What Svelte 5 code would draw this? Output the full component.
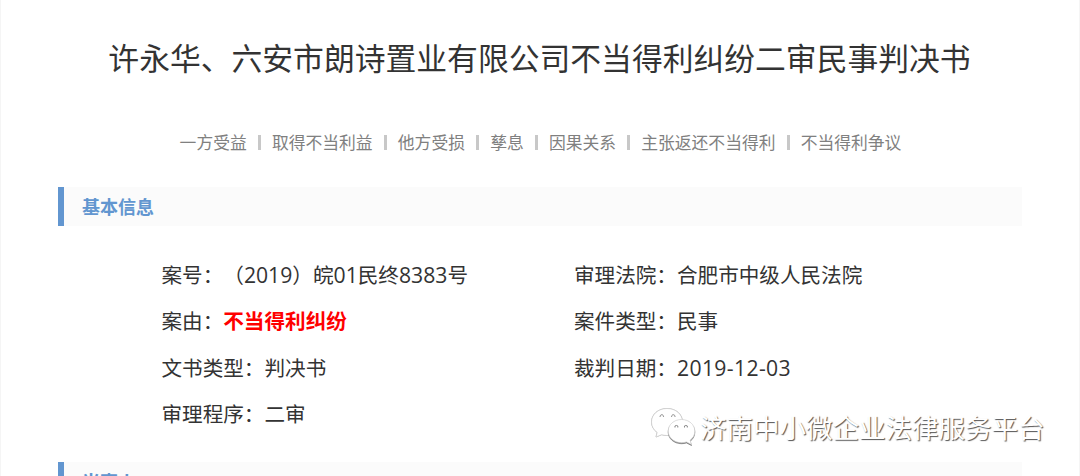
<script>
    const title = '许永华、六安市朗诗置业有限公司不当得利纠纷二审民事判决书';

    const keywords = ['一方受益', '取得不当利益', '他方受损', '孳息', '因果关系', '主张返还不当得利', '不当得利争议'];

    const leftInfo = [
        { label: '案号', value: '（2019）皖01民终8383号' },
        { label: '案由', value: '不当得利纠纷', highlight: true },
        { label: '文书类型', value: '判决书' },
        { label: '审理程序', value: '二审' }
    ];

    const rightInfo = [
        { label: '审理法院', value: '合肥市中级人民法院' },
        { label: '案件类型', value: '民事' },
        { label: '裁判日期', value: '2019-12-03', date: true }
    ];

    // Numbers are set slightly larger than the characters around them
    function splitNumbers(text) {
        return text.split(/([\d-]+)/).filter((part) => part);
    }
</script>

<main class="page">
    <h1>{title}</h1>

    <ul class="keywords">
        {#each keywords as keyword}
            <li>{keyword}</li>
        {/each}
    </ul>

    <h2 class="section-title">基本信息</h2>

    <div class="info">
        {#each [leftInfo, rightInfo] as column}
            <div class="column">
                {#each column as item}
                    <div class="row">{item.label}：<span class:highlight={item.highlight} class:date={item.date}>{#each splitNumbers(item.value) as part}<span class:number={/\d/.test(part)}>{part}</span>{/each}</span></div>
                {/each}
            </div>
        {/each}
    </div>

    <h2 class="section-title">当事人</h2>

    <!-- Account name over the page -->
    <div class="watermark">
        <svg width="46" height="40" viewBox="0 0 46 40">
            <path class="bubble" d="M17 .5C8.200.5 1.500 6.500 1.500 14c0 4.500 2.300 8 5.700 10.400L6 29l5.700-2.300c1.800.5 3.300.8 5.300.8 9 0 15.500-5.900 15.500-13.500S26 .5 17 .5z" />
            <path class="bubble front" d="M31.500 11.500c-7.600 0-13.300 5.200-13.300 11.600S23.900 34.700 31.500 34.700c1.800 0 3.500-.3 5-.8l5 2.600-1.400-4.200c3.100-2.200 4.700-5.500 4.700-9.200 0-6.400-5.700-11.600-13.300-11.600z" />
            <path class="eyes" d="M10.200 9a1.700 1.700 0 1 1 3.200 0M21.700 9a1.700 1.700 0 1 1 3.200 0M25 19.500a1.500 1.500 0 1 1 2.800 0M34.500 19.500a1.500 1.500 0 1 1 2.800 0" />
        </svg>
        <span>济南中小微企业法律服务平台</span>
    </div>
</main>

<style>
:global(body) {
    margin: 0;
    background: #fff;
}

.page {
    position: relative;
    box-sizing: border-box;
    height: 476px;
    padding: 37px 57px 0;
    overflow: hidden;
    border-left: 1px solid #f5f5f5;
    border-right: 1px solid #f5f5f5;
    font-family: "Open Sans", "Noto Sans CJK SC", sans-serif;
    text-spacing-trim: space-all;
    color: #333;
}

h1 {
    margin: 0 0 0 -1px;
    font-size: 30.8px;
    font-weight: 400;
    line-height: 42px;
    text-align: center;
    white-space: nowrap;
}

.keywords {
    display: flex;
    justify-content: center;
    margin: 52px 0 0;
    padding: 0 0 0 1px;
    list-style: none;
    font-size: 16.8px;
    line-height: 24px;
    color: #808080;
}

.keywords li {
    display: flex;
    align-items: center;
    white-space: nowrap;
}

/* Divider between keywords */
.keywords li + li::before {
    content: '';
    width: 3px;
    height: 15px;
    margin: 0 11.2px 2px 11px;
    background: #c8c8c8;
}

.section-title {
    box-sizing: border-box;
    height: 39px;
    margin: 32px 0 0;
    padding-left: 18px;
    border-left: 6px solid #6296d0;
    background: #fbfbfb;
    font-size: 18px;
    font-weight: 700;
    line-height: 41px;
    color: #6296d0;
}

.info {
    display: flex;
    height: 206px;
    padding: 26px 0 0 103.5px;
    box-sizing: border-box;
    font-size: 20.6px;
}

.column {
    width: 412.5px;
}

.row {
    height: 46.4px;
    line-height: 46.4px;
    white-space: nowrap;
}

.highlight {
    font-weight: 700;
    color: #f00;
}

.number {
    font-size: 21.2px;
    line-height: 1;
}

.date {
    letter-spacing: 0.35px;
}

.info + .section-title {
    margin-top: 30px;
}

.watermark {
    position: absolute;
    left: 649px;
    top: 408px;
    display: flex;
    align-items: center;
    font-size: 26.5px;
    line-height: 40px;
    color: #fff;
    white-space: nowrap;
    text-shadow: 1px 1px 1px #555;
}

.watermark span {
    margin-left: 4px;
}

.bubble {
    fill: #fff;
    stroke: #d0d0d0;
    stroke-width: 0.7;
    filter: drop-shadow(0 0.5px 0.5px #aaa);
}

.front {
    filter: drop-shadow(0 1px 0.5px #777);
}

.eyes {
    fill: none;
    stroke: #888;
}
</style>
